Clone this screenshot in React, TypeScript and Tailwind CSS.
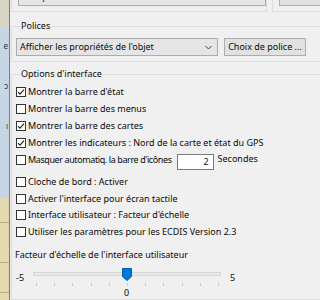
import React from "react";

const Check = ({ checked }: { checked?: boolean }) => (
  <span className="w-[10px] h-[10px] border border-[#333333] bg-white flex items-center justify-center shrink-0">
    {checked && (
      <svg width="8" height="8" viewBox="0 0 8 8">
        <path d="M1 4.2 L3 6.2 L7 1.6" stroke="#222" strokeWidth="1.1" fill="none" />
      </svg>
    )}
  </span>
);

const Row = ({
  checked,
  label,
  h = "h-[17px]",
  labelClass = "",
  children,
}: {
  checked?: boolean;
  label: string;
  h?: string;
  labelClass?: string;
  children?: React.ReactNode;
}) => (
  <div className={`flex items-center gap-[2px] ${h}`}>
    <Check checked={checked} />
    <span className={`whitespace-nowrap ${labelClass}`}>{label}</span>
    {children}
  </div>
);

const Chevron = () => (
  <svg width="7" height="5" viewBox="0 0 7 5">
    <path d="M0.5 1 L3.5 4 L6.5 1" stroke="#444" strokeWidth="1" fill="none" />
  </svg>
);

export default function App() {
  const ticks = Array.from({ length: 11 }, (_, i) => 3 + i * 18.2);
  return (
    <div
      className="w-[320px] h-[300px] overflow-hidden flex text-[9px] leading-[12px] text-[#0a0a0a]"
      style={{ fontFamily: '"Noto Sans", "Liberation Sans", sans-serif' }}
    >
      {/* left map strip */}
      <div className="w-[9px] h-full flex flex-col shrink-0">
        <div className="h-[28px] bg-[#d7d5c4]" />
        <div className="h-[170px] bg-[#c6d6e6] flex flex-col items-end pr-[1px] text-[8px] text-[#334] pt-[12px] gap-[28px]">
          <span>e</span>
          <span>ɔ</span>
          <span>ı</span>
        </div>
        <div className="flex-1 bg-[#e2d9ae] flex flex-col">
          <div className="h-[25px] border-b border-[#b8ad80]" />
          <div className="h-[40px] border-b border-[#b8ad80]" />
          <div className="h-[30px] border-b border-[#b8ad80]" />
        </div>
      </div>
      <div className="w-[1px] h-full bg-[#7a7a7a] shrink-0" />
      {/* main panel */}
      <div className="flex-1 bg-[#f0f0f0] flex flex-col pl-[1px] overflow-hidden">
        {/* top row (cut) */}
        <div className="flex h-[12px] shrink-0">
          <div className="w-[262px] h-[12px] border-x border-b border-[#dcdcdc] flex flex-col justify-end pb-[5px] pl-[6px]">
            <div className="w-[248px] h-[18px] shrink-0 bg-[#e5e5e5] border border-[#acacac] flex items-center justify-between pl-[3px] pr-[4px]">
              <span>Français</span>
              <Chevron />
            </div>
          </div>
          <div className="ml-[5px] w-[60px] h-[12px] border-l border-b border-[#dcdcdc] flex flex-col justify-end pb-[5px] pl-[6px] shrink-0">
            <div className="w-[60px] h-[18px] shrink-0 bg-[#e1e1e1] border border-[#adadad] flex items-center pl-[5px]">
              <span>Modifier</span>
            </div>
          </div>
        </div>

        {/* Polices */}
        <fieldset className="mt-[9px] w-[330px] border border-[#dcdcdc] pl-[4px] pt-[7px] pb-[5px] shrink-0">
          <legend className="ml-[4px] px-[1px] leading-[10px]">Polices</legend>
          <div className="flex gap-[6px]">
            <div className="w-[202px] h-[18px] bg-[#e5e5e5] border border-[#acacac] flex items-center justify-between pl-[3px] pr-[5px]">
              <span>Afficher les propriétés de l'objet</span>
              <Chevron />
            </div>
            <div className="w-[82px] h-[18px] bg-[#e1e1e1] border border-[#adadad] flex items-center justify-center">
              <span>Choix de police ...</span>
            </div>
          </div>
        </fieldset>

        {/* Options d'interface */}
        <fieldset className="mt-[7px] w-[330px] border border-[#dcdcdc] pl-[4px] pt-[4px] flex-1">
          <legend className="ml-[4px] px-[1px] leading-[10px]">Options d'interface</legend>
          <div className="flex flex-col">
            <Row checked label="Montrer la barre d'état" />
            <Row label="Montrer la barre des menus" />
            <Row checked label="Montrer la barre des cartes" />
            <Row checked label="Montrer les indicateurs : Nord de la carte et état du GPS" />
            <Row label="Masquer automatiq. la barre d'icônes" labelClass="tracking-[-0.4px]">
              <div className="ml-[3px] w-[37px] h-[16px] bg-white border border-[#7a7a7a] flex items-center justify-end pr-[4px] mt-[5px]">
                2
              </div>
              <span className="ml-[2px] mb-[1px]">Secondes</span>
            </Row>
          </div>
          <div className="flex flex-col mt-[6px]">
            <Row h="h-[16.5px]" label="Cloche de bord : Activer" />
            <Row h="h-[16.5px]" label="Activer l'interface pour écran tactile" />
            <Row h="h-[16.5px]" label="Interface utilisateur : Facteur d'échelle" />
            <Row h="h-[16.5px]" label="Utiliser les paramètres pour les ECDIS Version 2.3" />
          </div>
          <div className="mt-[9px] -ml-[1px]">Facteur d'échelle de l'interface utilisateur</div>
          <div className="flex items-start">
            <span className="w-[17px] mt-[11px]">-5</span>
            <div className="relative w-[188px] h-[36px]">
              <div className="absolute left-0 right-0 top-[11px] h-[4px] bg-[#e7eaea] border border-[#d6d6d6]" />
              {ticks.map((x, i) => (
                <div key={i} className="absolute top-[22px] w-[1px] h-[3px] bg-[#c4c4c4]" style={{ left: x }} />
              ))}
              <svg className="absolute left-[89px] top-[7px]" width="10" height="13" viewBox="0 0 10 13">
                <path d="M0.5 0.5 H9.5 V8.5 L5 12.5 L0.5 8.5 Z" fill="#0078d7" stroke="#005fb0" strokeWidth="1" />
              </svg>
              <span className="absolute left-[91px] top-[26px]">0</span>
            </div>
            <span className="ml-[9px] mt-[11px]">5</span>
          </div>
        </fieldset>
      </div>
    </div>
  );
}
